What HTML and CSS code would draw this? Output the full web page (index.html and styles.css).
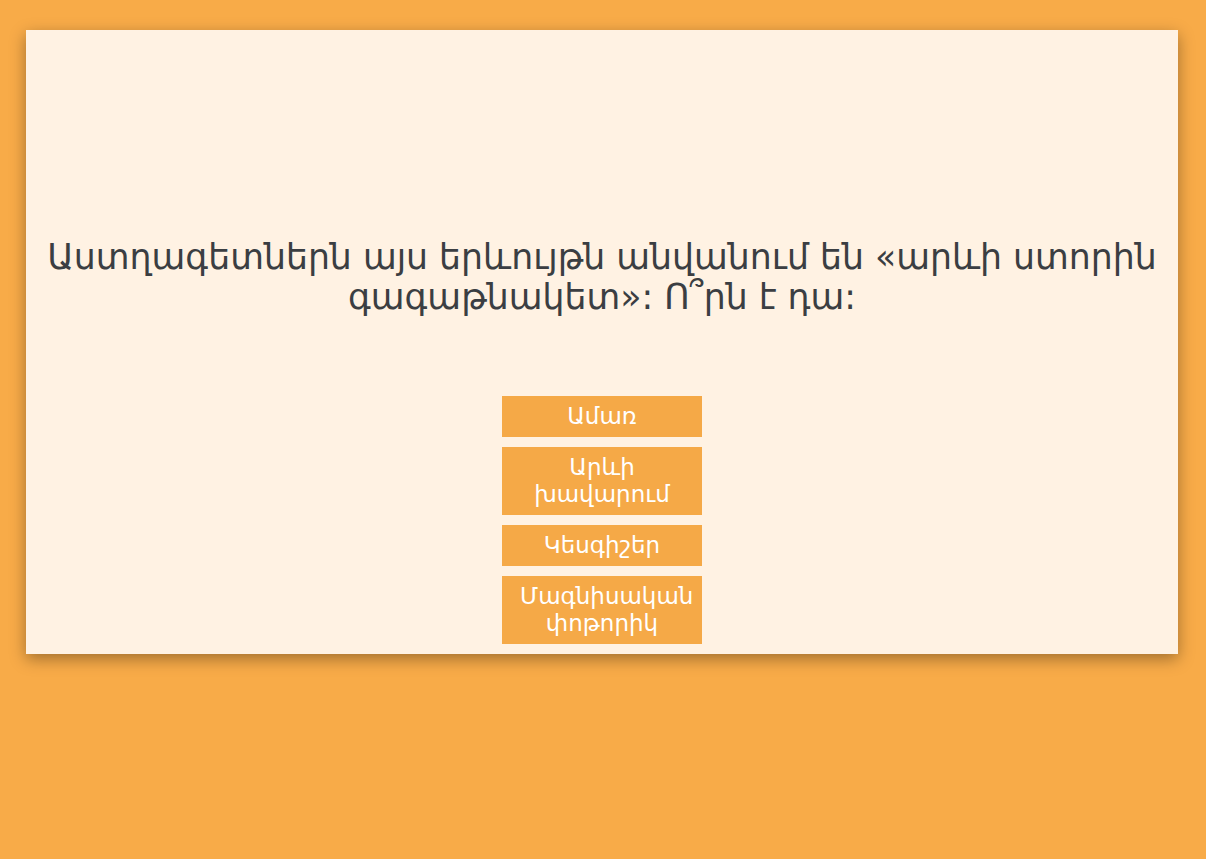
FILE: index.html
```html
<!DOCTYPE html>
<html lang="hy">
<head>
<meta charset="utf-8">
<link rel="stylesheet" href="styles.css">
</head>
<body>
<main class="card">
  <h1 class="question">Աստղագետներն այս երևույթն անվանում են «արևի ստորին գագաթնակետ»: Ո՞րն է դա:</h1>
  <div class="answers">
    <button class="answer">Ամառ</button>
    <button class="answer">Արևի խավարում</button>
    <button class="answer">Կեսգիշեր</button>
    <button class="answer">Մագնիսական փոթորիկ</button>
  </div>
</main>
</body>
</html>
```
FILE: styles.css
```css
html, body {
  margin: 0;
  padding: 0;
  background: #f8ab48;
  min-height: 100vh;
}
body {
  padding: 30px 28px 0 26px;
  font-family: "DejaVu Sans", sans-serif;
}
.card {
  background: #fff2e3;
  box-shadow: 0 5px 15px rgba(0,0,0,0.35);
  display: flex;
  flex-direction: column;
  align-items: center;
  padding: 207px 20px 10px;
}
.question {
  margin: 0 0 79px;
  font-weight: normal;
  font-size: 34.7px;
  line-height: 40px;
  color: #3b3e42;
  text-align: center;
}
.answers {
  display: flex;
  flex-direction: column;
  gap: 10px;
  width: 200px;
}
.answer {
  border: none;
  background: #f5a947;
  color: #ffffff;
  font-family: "DejaVu Sans", sans-serif;
  font-size: 23px;
  line-height: 27px;
  padding: 7px 18px;
  text-align: center;
}
```
